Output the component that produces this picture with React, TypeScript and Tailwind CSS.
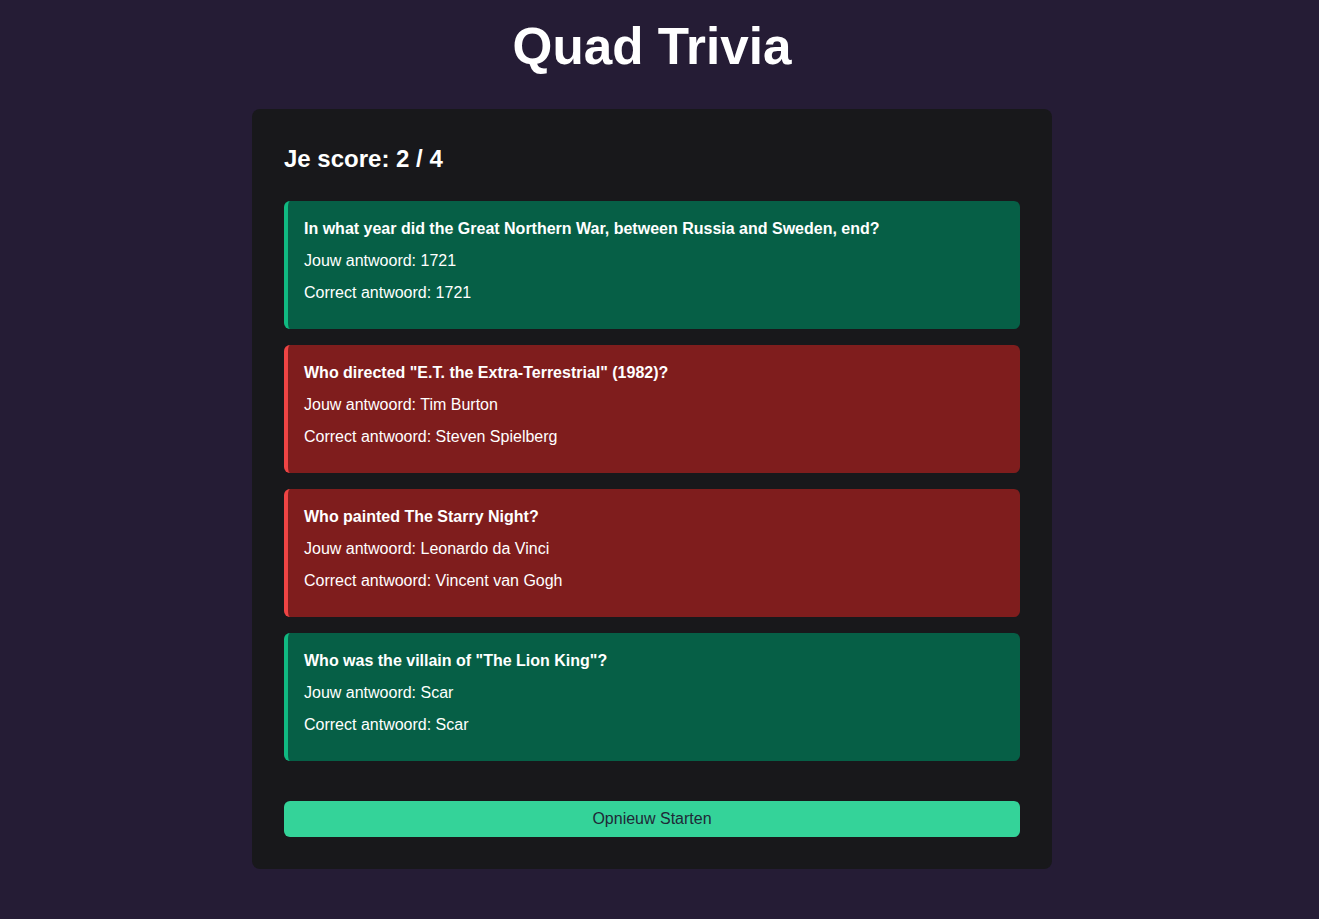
import React from 'react';

type Result = {
    question: string;
    answer: string;
    correct: string;
};

const results: Result[] = [
    {
        question: 'In what year did the Great Northern War, between Russia and Sweden, end?',
        answer: '1721',
        correct: '1721',
    },
    {
        question: 'Who directed "E.T. the Extra-Terrestrial" (1982)?',
        answer: 'Tim Burton',
        correct: 'Steven Spielberg',
    },
    {
        question: 'Who painted The Starry Night?',
        answer: 'Leonardo da Vinci',
        correct: 'Vincent van Gogh',
    },
    {
        question: 'Who was the villain of "The Lion King"?',
        answer: 'Scar',
        correct: 'Scar',
    },
];

const ResultItem: React.FC<{ result: Result }> = ({ result }) => {
    const isRight = result.answer === result.correct;
    return (
        <div
            className={`rounded-md border-l-4 px-4 py-4 text-white ${
                isRight ? 'bg-[#065f46] border-[#10b981]' : 'bg-[#7f1d1d] border-[#ef4444]'
            }`}
        >
            <p className="mb-2 font-bold leading-6">{result.question}</p>
            <p className="mb-2 leading-6">Jouw antwoord: {result.answer}</p>
            <p className="mb-2 leading-6">Correct antwoord: {result.correct}</p>
        </div>
    );
};

export default function App() {
    const score = results.filter(r => r.answer === r.correct).length;

    return (
        <div
            className="min-h-screen bg-[#251c35] pt-[19px] pr-[15px] pb-16 text-white"
            style={{ fontFamily: '"Liberation Sans", Arial, sans-serif' }}
        >
            <h1 className="mb-[34px] text-center text-[51.2px] font-bold leading-[1.1]">Quad Trivia</h1>

            <div className="mx-auto w-[800px] rounded-lg bg-[#18181b] p-8">
                <h2 className="mt-[2px] mb-[26px] text-2xl font-bold leading-8">
                    Je score: {score} / {results.length}
                </h2>

                <div className="flex flex-col gap-4">
                    {results.map((r, i) => (
                        <ResultItem key={i} result={r} />
                    ))}
                </div>

                <button className="mt-10 w-full rounded-md bg-[#34d399] py-1.5 text-base leading-6 text-[#1f2937]">
                    Opnieuw Starten
                </button>
            </div>
        </div>
    );
}
